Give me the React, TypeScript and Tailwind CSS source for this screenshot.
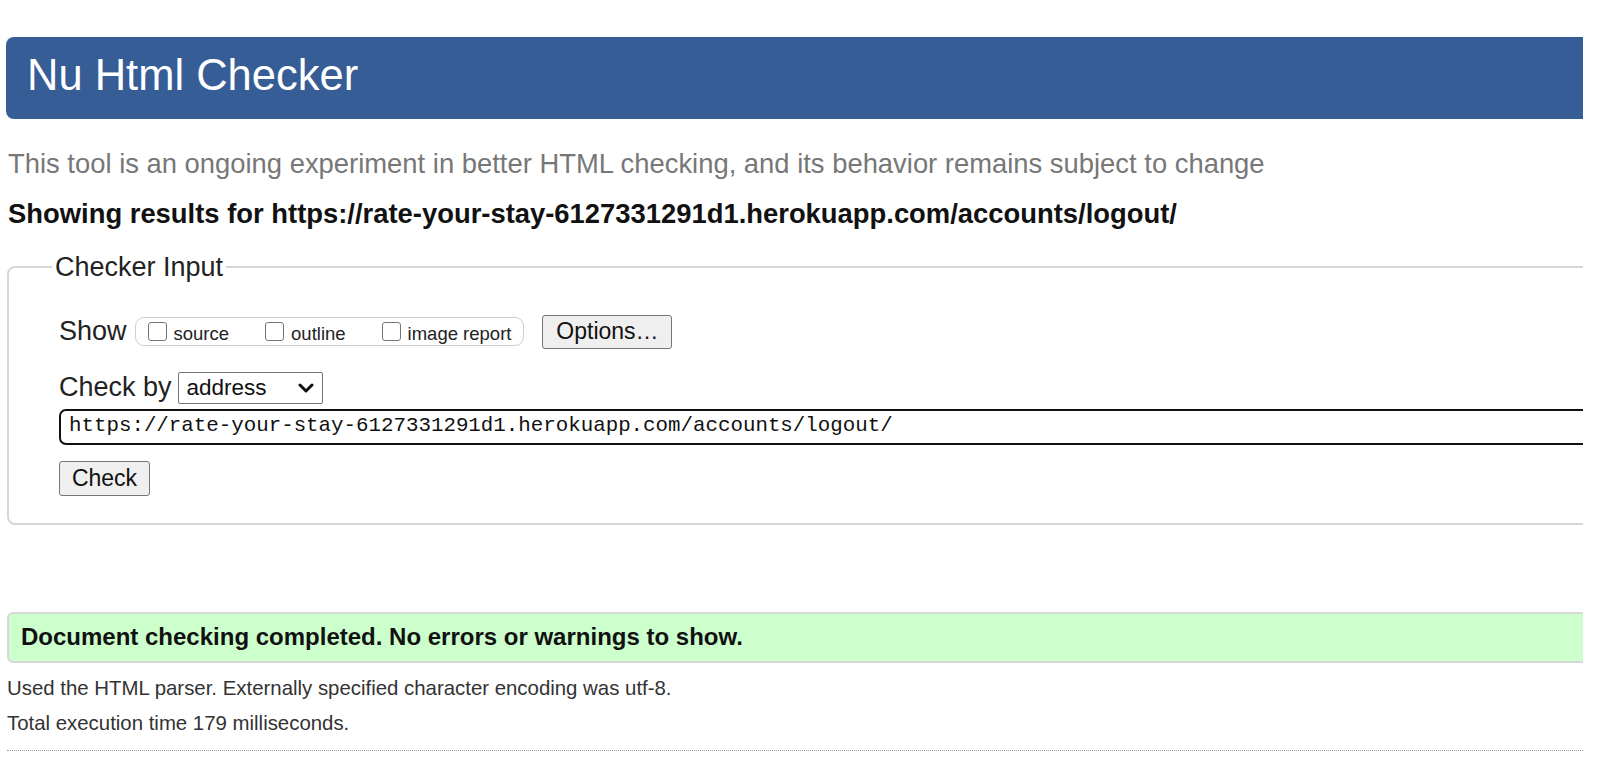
import React from "react";

const URL = "https://rate-your-stay-6127331291d1.herokuapp.com/accounts/logout/";

function Box() {
  return <span className="inline-block h-[19px] w-[19px] shrink-0 rounded-[3px] border border-[#767676] bg-white" />;
}

function Opt({ label, first }: { label: string; first?: boolean }) {
  return (
    <span className={`flex items-center ${first ? "" : "ml-[36px]"}`}>
      <Box />
      <span className="ml-[7px] mt-[4px] text-[18.5px] leading-none">{label}</span>
    </span>
  );
}

export default function App() {
  return (
    <div className="w-[1583px] overflow-hidden bg-white pb-[30px] font-['Liberation_Sans',Arial,sans-serif] text-[#222]">
      <header className="ml-[6px] mt-[37px] h-[82px] w-[1700px] rounded-l-[8px] bg-[#365d95] pl-[21px] pt-[17px]">
        <h1 className="text-[43.5px] font-normal leading-none text-white">Nu Html Checker</h1>
      </header>

      <p className="ml-[8px] mt-[31px] whitespace-nowrap text-[27.4px] leading-none text-[#777]">
        This tool is an ongoing experiment in better HTML checking, and its behavior remains subject to change
      </p>
      <p className="ml-[8px] mt-[23px] whitespace-nowrap text-[27.4px] font-bold leading-none text-[#111]">
        Showing results for {URL}
      </p>

      <fieldset className="ml-[7px] mt-[26px] w-[1700px] rounded-[8px] border-2 border-[#d6d6d6] pb-[27px]">
        <legend className="ml-[43px] px-[3px] text-[27px] leading-none">Checker Input</legend>
        <div className="pl-[50px]">
          {/* Show row */}
          <div className="mt-[34px] flex h-[34px] items-center">
            <span className="text-[27px] leading-none">Show</span>
            <div className="ml-[8px] flex h-[29px] items-center rounded-[9px] border border-[#cfcfcf] pl-[12px] pr-[12px]">
              <Opt label="source" first />
              <Opt label="outline" />
              <Opt label="image report" />
            </div>
            <button className="ml-[18px] h-[34px] w-[130px] rounded-[3px] border border-[#767676] bg-[#efefef] text-[23px] leading-none text-[#111]">
              Options…
            </button>
          </div>

          {/* Check by */}
          <div className="mt-[23px] flex h-[32px] items-center">
            <span className="text-[27px] leading-none">Check by</span>
            <div className="ml-[6px] flex h-[32px] w-[145px] items-center justify-between rounded-[2px] border border-[#767676] bg-white pl-[8px] pr-[8px]">
              <span className="text-[22.5px] leading-none text-[#111]">address</span>
              <svg width="16" height="10" viewBox="0 0 16 10" fill="none" stroke="#111" strokeWidth="3" strokeLinecap="round" strokeLinejoin="round">
                <polyline points="2,2 8,8 14,2" />
              </svg>
            </div>
          </div>

          <div className="mt-[5px] flex h-[36px] w-[1600px] items-center rounded-l-[7px] border-2 border-[#111] pl-[8px] font-['Liberation_Mono',monospace] text-[20.8px] leading-none text-[#111]">
            {URL}
          </div>

          <button className="mt-[16px] h-[35px] w-[91px] rounded-[3px] border border-[#767676] bg-[#efefef] text-[23px] leading-none text-[#111]">
            Check
          </button>
        </div>
      </fieldset>

      <div className="ml-[7px] mt-[87px] flex h-[51px] w-[1700px] items-center rounded-l-[6px] border-2 border-[#d8d8d8] bg-[#ccffcc] pl-[12px]">
        <span className="text-[24px] font-bold leading-none text-[#111]">
          Document checking completed. No errors or warnings to show.
        </span>
      </div>

      <p className="ml-[7px] mt-[15px] text-[20.4px] leading-none text-[#333]">
        Used the HTML parser. Externally specified character encoding was utf-8.
      </p>
      <p className="ml-[7px] mt-[15px] text-[20.4px] leading-none text-[#333]">Total execution time 179 milliseconds.</p>

      <div className="ml-[7px] mt-[16px] w-[1700px] border-t border-dotted border-[#999]" />
    </div>
  );
}
